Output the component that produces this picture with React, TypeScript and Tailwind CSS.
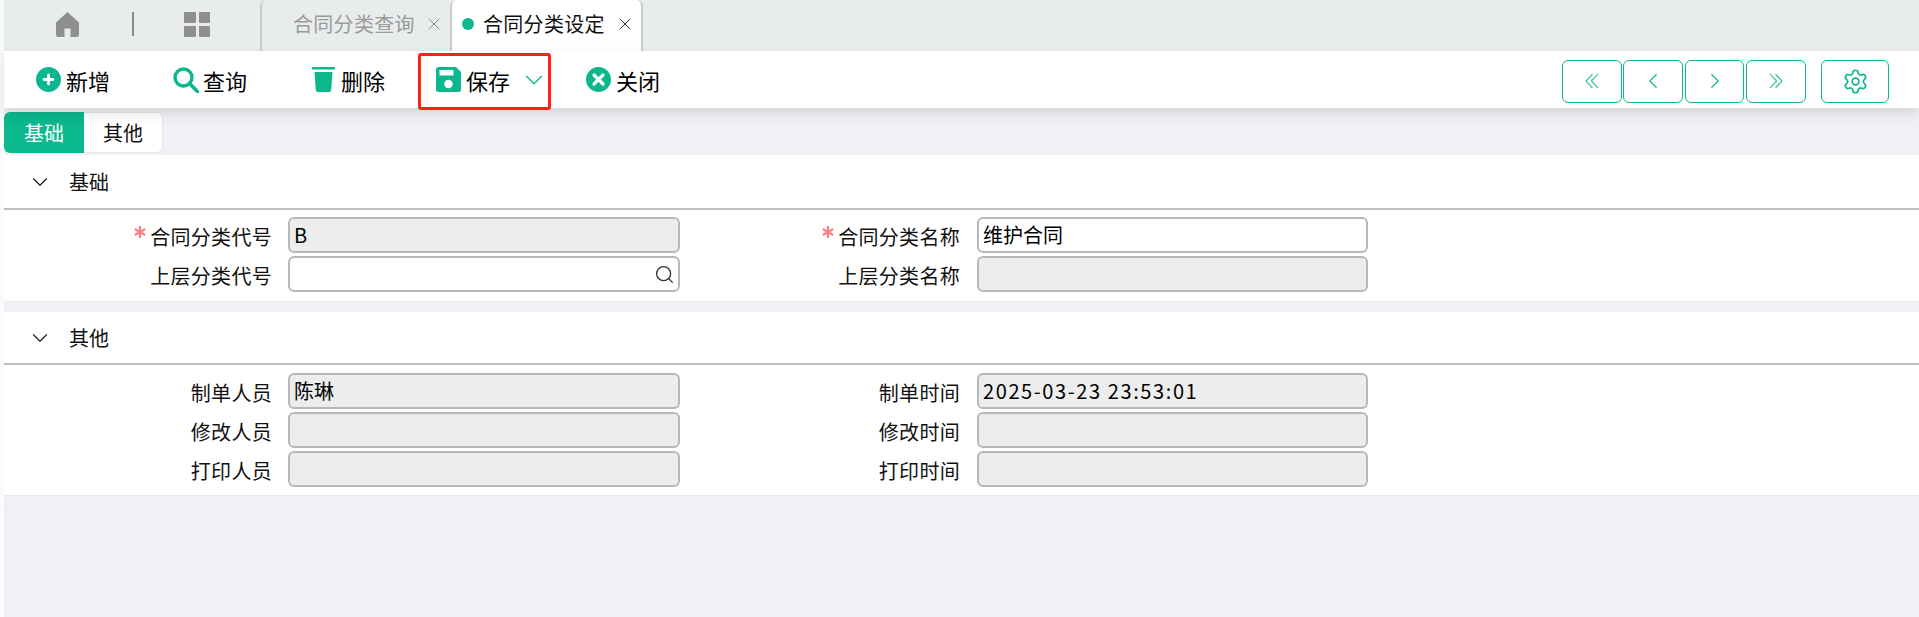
import React from 'react';
import { ChevronDown, ChevronLeft, ChevronRight, Search, Settings, X } from 'lucide-react';

const font = 'font-["Microsoft_YaHei","Noto_Sans_CJK_SC",sans-serif]';

const ToolButton: React.FC<{ icon: React.ReactNode; label: string; className: string }> = ({ icon, label, className }) => (
  <div className={`flex items-center ${className}`}>
    {icon}
    <span className="text-[22px] leading-none text-black">{label}</span>
  </div>
);

const PlusIcon = () => (
  <svg viewBox="0 0 25 25" className="w-[25px] h-[25px] mr-[5px] shrink-0">
    <circle cx="12.5" cy="12.5" r="12.5" fill="#0bb78c" />
    <path d="M12.5 8v9M8 12.5h9" stroke="#fff" strokeWidth="2.8" strokeLinecap="round" />
  </svg>
);

const SearchIcon = () => (
  <svg viewBox="0 0 26 26" className="w-[26px] h-[26px] mr-[4px] shrink-0">
    <circle cx="10.5" cy="10.5" r="8.500" fill="none" stroke="#0bb78c" strokeWidth="3.400" />
    <path d="M16.500 16.500L24.500 24.500" stroke="#0bb78c" strokeWidth="3.800" strokeLinecap="round" />
  </svg>
);

const TrashIcon = () => (
  <svg viewBox="0 0 23 25" className="w-[23px] h-[25px] mr-[6px] shrink-0">
    <path d="M1 0h21a1 1 0 0 1 1 1v1.500H0V1a1 1 0 0 1 1-1z" fill="#0bb78c" />
    <path d="M2.500 5h18l-1.300 18q-.2 2-2.200 2H6q-2 0-2.200-2z" fill="#0bb78c" />
  </svg>
);

const SaveIcon = () => (
  <svg viewBox="0 0 25 25" className="w-[25px] h-[25px] mr-[5px] shrink-0">
    <path d="M2.500 0H20l5 5v17.500a2.500 2.500 0 0 1-2.500 2.500h-20A2.500 2.500 0 0 1 0 22.500v-20A2.500 2.500 0 0 1 2.500 0z" fill="#0bb78c" />
    <rect x="3.500" y="3" width="14" height="5.500" fill="#fff" />
    <circle cx="12.500" cy="17" r="4.300" fill="#fff" />
  </svg>
);

const CloseIcon = () => (
  <svg viewBox="0 0 25 25" className="w-[25px] h-[25px] mr-[5px] shrink-0">
    <circle cx="12.500" cy="12.500" r="12.500" fill="#0bb78c" />
    <path d="M8 8l9 9M17 8l-9 9" stroke="#fff" strokeWidth="3.200" strokeLinecap="round" />
  </svg>
);

const DoubleChevron: React.FC<{ flip?: boolean }> = ({ flip }) => (
  <svg viewBox="0 0 14 16" className={`w-[14px] h-[16px] ${flip ? '-scale-x-100' : ''}`} fill="none" stroke="currentColor" strokeWidth="1.100">
    <path d="M7.500 1L1 8l6.500 7M13 1L6.500 8l6.500 7" />
  </svg>
);

type FieldProps = { label: string; value?: string; required?: boolean; disabled?: boolean; search?: boolean; wide?: boolean };

const Field: React.FC<FieldProps & { labelWidth: string; inputWidth: string }> = ({
  label, value, required, disabled = true, search, wide, labelWidth, inputWidth,
}) => (
  <>
    <div className={`${labelWidth} shrink-0 flex justify-end items-center pt-[3px] text-[20px] tracking-[0.3px] leading-none text-[#111]`}>
      {required && (
        <svg viewBox="0 0 12 12" className="w-[12px] h-[12px] mr-[4px] mt-[-10px] shrink-0" stroke="#ff8080" strokeWidth="2.200">
          <path d="M6 0v12M.8 3l10.400 6M11.200 3L.8 9" />
        </svg>
      )}
      {label}
    </div>
    <div
      className={`${inputWidth} shrink-0 h-[36px] rounded-[6px] border-2 border-[#b7b8b8] flex items-center justify-between pl-[4px] pr-[3px] text-[20px] leading-none text-black ${disabled ? 'bg-[#ecedec]' : 'bg-white'}`}
    >
      <span className={wide ? 'tracking-[1.600px]' : ''}>{value}</span>
      {search && <Search className="w-[21px] h-[21px] text-[#333]" strokeWidth={1.500} />}
    </div>
  </>
);

const FormRow: React.FC<{ left: FieldProps; right: FieldProps }> = ({ left, right }) => (
  <div className="flex h-[36px]">
    <Field {...left} labelWidth="w-[268px] mr-[16px]" inputWidth="w-[392px]" />
    <Field {...right} labelWidth="w-[280px] mr-[17px]" inputWidth="w-[391px]" />
  </div>
);

const SectionHeader: React.FC<{ title: string; className: string }> = ({ title, className }) => (
  <div className={`${className} border-b-2 border-[#bcbdbd] flex items-center`}>
    <ChevronDown className="w-[26px] h-[26px] ml-[23px] text-[#222]" strokeWidth={1.100} />
    <span className="ml-[16px] text-[20px] leading-none text-[#111]">{title}</span>
  </div>
);

const NavButton: React.FC<{ children: React.ReactNode; className?: string }> = ({ children, className = 'w-[60px]' }) => (
  <div className={`${className} h-[43px] rounded-[6px] border border-[#0bb78c] flex items-center justify-center text-[#0bb78c]`}>
    {children}
  </div>
);

export default function App() {
  return (
    <div className={`w-[1919px] h-[617px] overflow-hidden bg-[#fafafa] ${font} pl-[4px]`}>
      <div className="h-full bg-[#eff1f5]">
        <div className="h-[51px] bg-[#e9ecec] flex items-center relative">
          <svg viewBox="0 0 23 25" className="w-[23px] h-[25px] ml-[52px] mt-[-3px]">
            <path d="M11.500 0L23 10.500v12a2.500 2.500 0 0 1-2.500 2.500H14.500v-8.500h-6V25H2.500A2.500 2.500 0 0 1 0 22.500v-12z" fill="#8f8f8f" />
          </svg>
          <div className="w-[2px] h-[24px] bg-[#8a8a8a] ml-[53px] mt-[-3px]" />
          <div className="ml-[50px] mt-[-3px] grid grid-cols-2 gap-[3px] w-[26px] h-[25px]">
            <div className="bg-[#8f8f8f] rounded-[1px]" />
            <div className="bg-[#8f8f8f] rounded-[1px]" />
            <div className="bg-[#8f8f8f] rounded-[1px]" />
            <div className="bg-[#8f8f8f] rounded-[1px]" />
          </div>
          <div className="ml-[50px] w-[190px] h-[51px] border-l-2 border-[#c9cccc] rounded-tl-[6px] flex items-center pl-[31px] pb-[3px]">
            <span className="text-[20px] leading-none text-[#9a9a9a] w-[122px] tracking-[0.3px]">合同分类查询</span>
            <X className="w-[20px] h-[20px] ml-[9px] text-[#8a8a8a]" strokeWidth={1.200} />
          </div>
          <div className="w-[193px] h-[51px] bg-white border-x-2 border-[#c9cccc] rounded-t-[6px] flex items-center pl-[10px] pb-[3px]">
            <span className="w-[12px] h-[12px] rounded-full bg-[#0bb78c] mr-[9px]" />
            <span className="text-[20px] leading-none text-[#111] w-[122px] tracking-[0.3px]">合同分类设定</span>
            <X className="w-[20px] h-[20px] ml-[10px] text-[#333]" strokeWidth={1.200} />
          </div>
        </div>

        <div className="h-[57px] bg-white flex items-center shadow-[0_5px_12px_rgba(0,0,0,0.12)] relative">
          <ToolButton icon={<PlusIcon />} label="新增" className="ml-[32px] w-[137px]" />
          <ToolButton icon={<SearchIcon />} label="查询" className="w-[139px]" />
          <ToolButton icon={<TrashIcon />} label="删除" className="w-[106px]" />
          <div className="w-[133px] h-[57px] mt-[4px] border-[3px] border-[#ff2015] rounded-[3px] flex items-center pl-[15px] pb-[4px]">
            <SaveIcon />
            <span className="text-[22px] leading-none text-black whitespace-nowrap">保存</span>
            <ChevronDown className="w-[30px] h-[30px] ml-[9px] shrink-0 text-[#0bb78c]" strokeWidth={1} />
          </div>
          <div className="ml-[35px]">
            <ToolButton icon={<CloseIcon />} label="关闭" className="" />
          </div>
          <div className="ml-auto mr-[30px] mt-[3px] flex items-center">
            <div className="flex gap-[1px]">
              <NavButton><DoubleChevron /></NavButton>
              <NavButton><ChevronLeft className="w-[26px] h-[26px]" strokeWidth={1} /></NavButton>
              <NavButton className="w-[59px] ml-[1px]"><ChevronRight className="w-[26px] h-[26px]" strokeWidth={1} /></NavButton>
              <NavButton className="w-[60px] ml-[1px]"><DoubleChevron flip /></NavButton>
            </div>
            <NavButton className="w-[68px] ml-[15px]"><Settings className="w-[27px] h-[27px]" strokeWidth={1.500} /></NavButton>
          </div>
        </div>

        <div className="h-[41px] mt-[4px] flex">
          <div className="w-[80px] bg-[#0bb78c] rounded-l-[6px] text-white text-[20px] leading-none flex items-center justify-center">基础</div>
          <div className="w-[79px] bg-white border border-l-0 border-[#e3e5ea] rounded-r-[6px] text-[#111] text-[20px] leading-none flex items-center justify-center">其他</div>
        </div>

        <div className="mt-[2px] h-[147px] bg-white border-b border-[#e8eaee]">
          <SectionHeader title="基础" className="h-[55px]" />
          <div className="pt-[7px] flex flex-col gap-[3px]">
            <FormRow left={{ label: '合同分类代号', value: 'B', required: true }} right={{ label: '合同分类名称', value: '维护合同', required: true, disabled: false }} />
            <FormRow left={{ label: '上层分类代号', disabled: false, search: true }} right={{ label: '上层分类名称' }} />
          </div>
        </div>

        <div className="mt-[10px] h-[184px] bg-white border-b border-[#e8eaee]">
          <SectionHeader title="其他" className="h-[53px]" />
          <div className="pt-[8px] flex flex-col gap-[3px]">
            <FormRow left={{ label: '制单人员', value: '陈琳' }} right={{ label: '制单时间', value: '2025-03-23 23:53:01', wide: true }} />
            <FormRow left={{ label: '修改人员' }} right={{ label: '修改时间' }} />
            <FormRow left={{ label: '打印人员' }} right={{ label: '打印时间' }} />
          </div>
        </div>
        <div className="h-[11px] border-b border-[#eceef2]" />
      </div>
    </div>
  );
}
